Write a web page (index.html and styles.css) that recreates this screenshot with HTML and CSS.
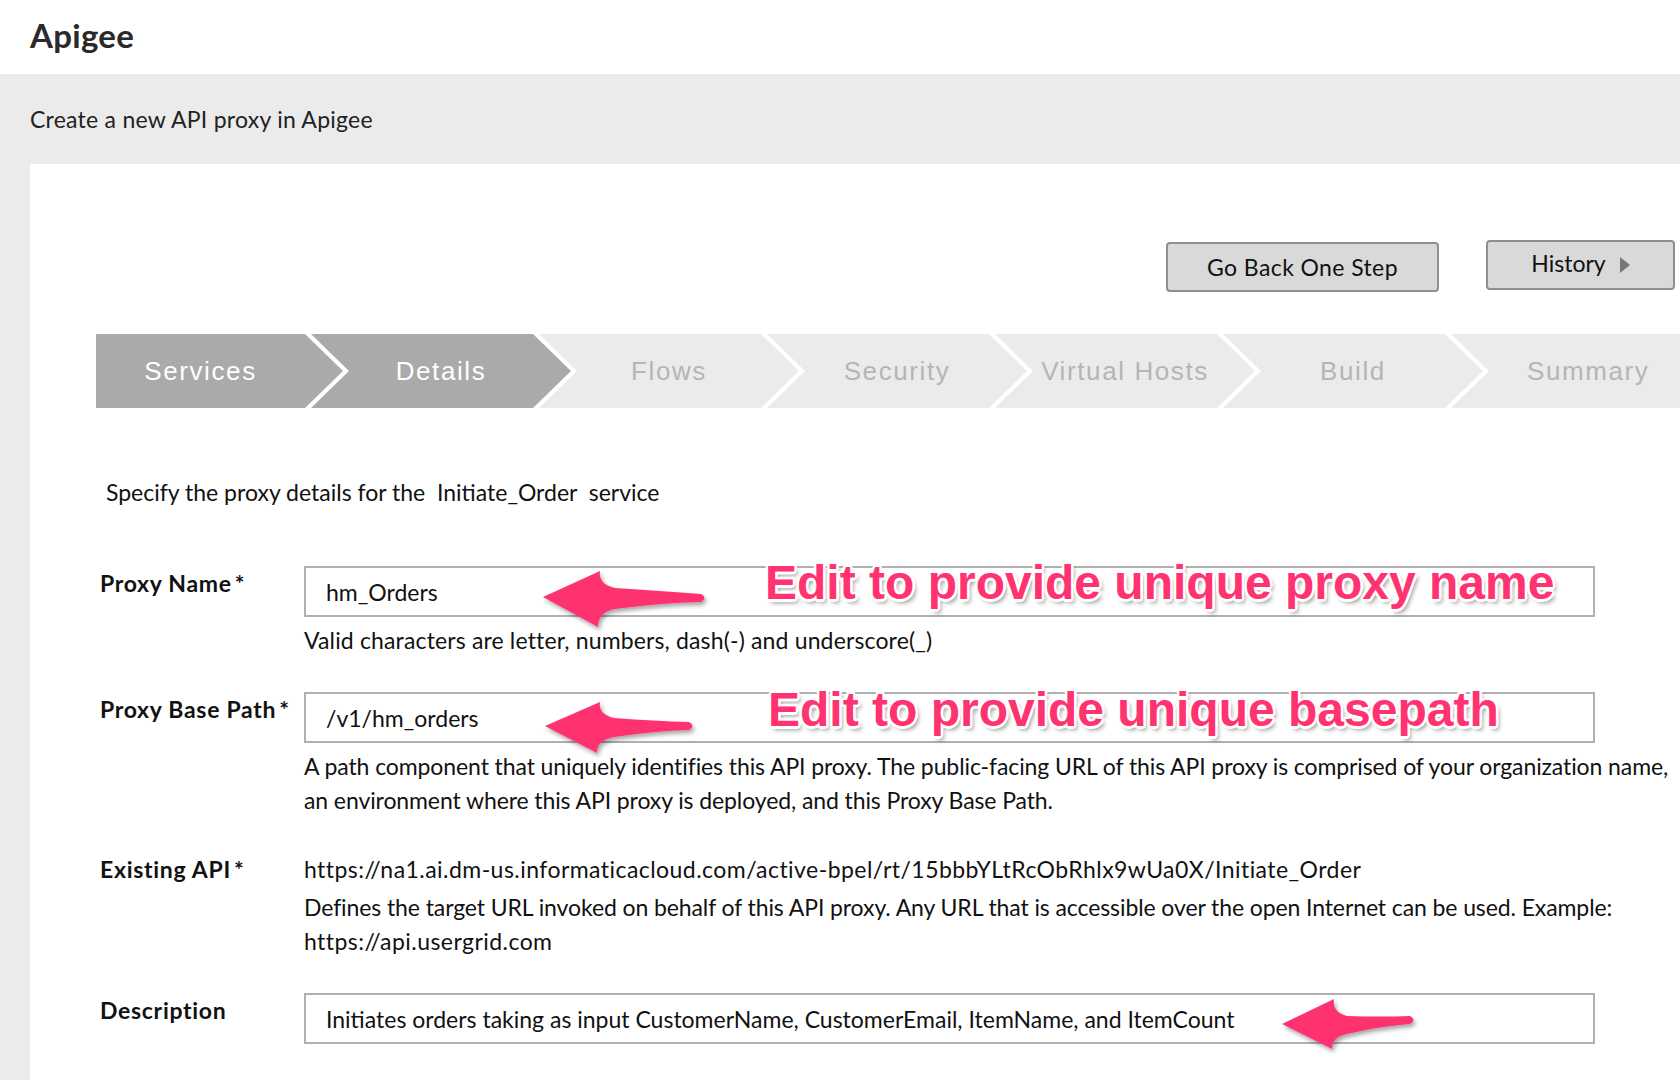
FILE: index.html
```html
<!DOCTYPE html>
<html lang="en">
<head>
<meta charset="utf-8">
<title>Apigee</title>
<link rel="stylesheet" href="styles.css">
</head>
<body>
<header class="topbar"><h1 class="brand">Apigee</h1></header>
<main class="stage">
  <div class="subtitle">Create a new API proxy in Apigee</div>
  <section class="panel">
    <div class="actions">
      <button class="btn btn-back" type="button">Go Back One Step</button>
      <button class="btn btn-history" type="button">History <span class="tri"></span></button>
    </div>
    <ol class="steps">
      <li class="step done first">Services</li>
      <li class="step done">Details</li>
      <li class="step">Flows</li>
      <li class="step">Security</li>
      <li class="step">Virtual Hosts</li>
      <li class="step">Build</li>
      <li class="step last">Summary</li>
    </ol>
    <p class="intro">Specify the proxy details for the&nbsp; Initiate_Order&nbsp; service</p>
    <div class="form">
      <div class="row">
        <div class="label">Proxy Name<span class="req">*</span></div>
        <div class="control">
          <div class="field">hm_Orders
            <svg class="arrow a1" width="200" height="100" viewBox="0 0 200 100">
              <defs><filter id="sh1" x="-20%" y="-30%" width="140%" height="160%"><feDropShadow dx="2" dy="3" stdDeviation="2" flood-color="#000" flood-opacity="0.35"/></filter></defs>
              <path transform="translate(9 41)" filter="url(#sh1)" fill="#ff3370" d="M0,0 L57,-26 Q55,-13 72,-9 Q118,-6 158,-3 Q165,1 158,5 Q118,6 72,12 Q55,15 55,30 Z"/>
            </svg>
            <span class="note n1">Edit to provide unique proxy name</span>
          </div>
          <div class="help loose">Valid characters are letter, numbers, dash(-) and underscore(_)</div>
        </div>
      </div>
      <div class="row">
        <div class="label">Proxy Base Path<span class="req">*</span></div>
        <div class="control">
          <div class="field">/v1/hm_orders
            <svg class="arrow a2" width="200" height="100" viewBox="0 0 200 100">
              <defs><filter id="sh2" x="-20%" y="-30%" width="140%" height="160%"><feDropShadow dx="2" dy="3" stdDeviation="2" flood-color="#000" flood-opacity="0.35"/></filter></defs>
              <path transform="translate(9 41)" filter="url(#sh2)" fill="#ff3370" d="M0,0 L55,-24 Q53,-12 69,-8 Q110,-5 144,-4 Q151,0 144,4 Q110,5 69,11 Q52,14 52,27 Z"/>
            </svg>
            <span class="note n2">Edit to provide unique basepath</span>
          </div>
          <div class="help snug"><span class="ln">A path component that uniquely identifies this API proxy. The public-facing URL of this API proxy is comprised of your organization name,</span><br><span class="ln">an environment where this API proxy is deployed, and this Proxy Base Path.</span></div>
        </div>
      </div>
      <div class="row">
        <div class="label">Existing API<span class="req">*</span></div>
        <div class="control">
          <div class="value url">https://na1.ai.dm-us.informaticacloud.com/active-bpel/rt/15bbbYLtRcObRhlx9wUa0X/Initiate_Order</div>
          <div class="help tight"><span class="ln snug">Defines the target URL invoked on behalf of this API proxy. Any URL that is accessible over the open Internet can be used. Example:</span><br><span class="ln url">https://api.usergrid.com</span></div>
        </div>
      </div>
      <div class="row">
        <div class="label">Description</div>
        <div class="control">
          <div class="field">Initiates orders taking as input CustomerName, CustomerEmail, ItemName, and ItemCount
            <svg class="arrow a3" width="200" height="100" viewBox="0 0 200 100">
              <defs><filter id="sh3" x="-20%" y="-30%" width="140%" height="160%"><feDropShadow dx="2" dy="3" stdDeviation="2" flood-color="#000" flood-opacity="0.35"/></filter></defs>
              <path transform="translate(9 41)" filter="url(#sh3)" fill="#ff3370" d="M0,0 L52,-25 Q50,-12 65,-8 Q100,-7 128,-8 Q135,-4 128,0 Q100,2 65,10 Q50,13 50,25 Z"/>
            </svg>
          </div>
        </div>
      </div>
    </div>
  </section>
</main>
</body>
</html>
```

FILE: styles.css
```css
* { box-sizing: border-box; }
html, body { margin: 0; padding: 0; }
body {
  width: 1680px;
  height: 1080px;
  overflow: hidden;
  background: #ebebeb;
  font-family: Lato, "Open Sans", sans-serif;
  color: #111;
}
.topbar {
  height: 74px;
  background: #fff;
  display: flex;
  align-items: center;
  padding: 0 0 4px 30px;
}
.brand {
  margin: 0;
  font-size: 33px;
  font-weight: 700;
  color: #2a2a2a;
  line-height: 1;
  letter-spacing: 0.3px;
}
.stage {
  background: #ebebeb;
  padding-left: 30px;
}
.subtitle {
  height: 90px;
  display: flex;
  align-items: center;
  font-size: 23px;
  letter-spacing: 0.25px;
  color: #222;
}
.panel {
  background: #fff;
  min-height: 916px;
  padding-top: 76px;
}
.actions {
  display: flex;
  justify-content: flex-end;
  align-items: flex-start;
  gap: 47px;
  padding-right: 5px;
  height: 52px;
}
.btn {
  font-family: inherit;
  font-size: 23px;
  height: 50px;
  background: #d9d9d9;
  border: 2px solid #8f8f8f;
  border-radius: 4px;
  color: #111;
  padding: 0;
  display: flex;
  align-items: center;
  justify-content: center;
}
.btn-back { width: 273px; margin-top: 2px; letter-spacing: 0.4px; }
.btn-history { width: 189px; gap: 14px; padding-bottom: 4px; }
.tri {
  width: 0;
  height: 0;
  margin-top: 4px;
  border-left: 10px solid #777;
  border-top: 8px solid transparent;
  border-bottom: 8px solid transparent;
}
.steps {
  list-style: none;
  margin: 42px 0 0 66px;
  padding: 0;
  display: flex;
  height: 74px;
}
.step {
  flex: 0 0 260px;
  margin-left: -32px;
  height: 74px;
  background: #ebebeb;
  color: #b5b5b5;
  display: flex;
  align-items: center;
  justify-content: center;
  padding: 0 38px;
  font-family: "Liberation Sans", Arial, sans-serif;
  font-size: 26px;
  letter-spacing: 1.6px;
  white-space: nowrap;
  clip-path: polygon(0 0, calc(100% - 38px) 0, 100% 50%, calc(100% - 38px) 100%, 0 100%, 38px 50%);
}
.step.first {
  flex-basis: 247px;
  margin-left: 0;
  padding-left: 0;
  clip-path: polygon(0 0, calc(100% - 38px) 0, 100% 50%, calc(100% - 38px) 100%, 0 100%);
}
.step.last {
  flex-basis: 300px;
  justify-content: flex-start;
  padding-left: 76px;
  clip-path: polygon(0 0, 100% 0, 100% 100%, 0 100%, 38px 50%);
}
.step.done { background: #aaaaaa; color: #fff; }
.intro {
  margin: 67px 0 0 76px;
  font-size: 23px;
  line-height: 34px;
}
.form {
  margin-top: 57px;
  padding-left: 70px;
  font-size: 23px;
}
.row {
  display: grid;
  grid-template-columns: 204px 1fr;
  margin-bottom: 35px;
}
.label {
  font-weight: 700;
  line-height: 34px;
  letter-spacing: 0.7px;
  white-space: nowrap;
}
.req { margin-left: 3px; }
.field {
  position: relative;
  width: 1291px;
  height: 51px;
  border: 2px solid #b0b0b0;
  padding-left: 20px;
  display: flex;
  align-items: center;
}
.help { margin-top: 6px; line-height: 34px; }
.help.tight { margin-top: 4px; }
.loose { letter-spacing: 0.15px; }
.snug { letter-spacing: -0.1px; }
.ln { white-space: nowrap; }
.value { line-height: 34px; white-space: nowrap; }
.url { letter-spacing: 0.45px; }
.arrow { position: absolute; overflow: visible; }
.a1 { left: 228px; top: -12px; }
.a2 { left: 230px; top: -9px; }
.a3 { left: 967px; top: -12px; }
.note {
  position: absolute;
  white-space: nowrap;
  font-family: "Liberation Sans", Arial, sans-serif;
  font-weight: 700;
  font-size: 48px;
  line-height: 48px;
  letter-spacing: 0;
  color: #ff3370;
  text-shadow:
    2.5px 0 #fff, -2.5px 0 #fff, 0 2.5px #fff, 0 -2.5px #fff,
    1.8px 1.8px #fff, -1.8px 1.8px #fff, 1.8px -1.8px #fff, -1.8px -1.8px #fff,
    3px 4px 4px rgba(0, 0, 0, 0.4);
}
.n1 { left: 459px; top: -9px; }
.n2 { left: 462px; top: -8px; }
```
